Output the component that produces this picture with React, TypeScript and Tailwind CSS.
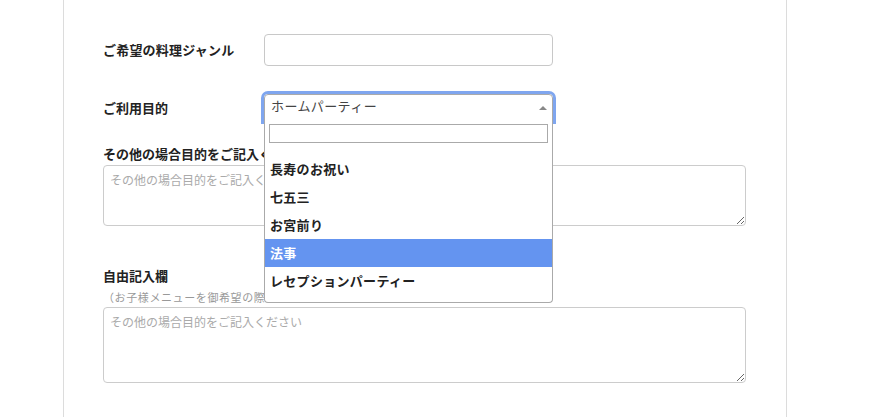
import React from 'react';

const FONT = { fontFamily: '"Noto Sans CJK JP", "Noto Sans", sans-serif' };

const OPTIONS = ['長寿のお祝い', '七五三', 'お宮前り', '法事', 'レセプションパーティー'];

export default function App() {
  return (
    <div className="min-h-screen bg-white text-[#222]" style={FONT}>
      <div className="ml-[63px] w-[724px] min-h-[417px] border-x border-[#dcdcdc] px-[39px] pt-[34px]">
        {/* 料理ジャンル */}
        <div className="flex items-center">
          <label className="w-[161px] text-[13px] font-bold leading-[18px] tracking-[0.2px]">ご希望の料理ジャンル</label>
          <input className="w-[289px] h-[32px] rounded-[4px] border border-[#c8c8c8] bg-white px-2 text-[13px] outline-none" />
        </div>

        {/* 利用目的 */}
        <div className="flex items-center mt-[28px] relative z-10">
          <label className="w-[161px] text-[13px] font-bold leading-[18px]">ご利用目的</label>
          <div className="relative w-[289px]">
            <div className="h-[27px] flex items-center justify-between rounded-t-[4px] border border-[#aaa] bg-white pl-[6px] pr-[5px] pb-[3px] outline-[3px] outline-[#7fa6ef] [outline-style:solid]">
              <span className="text-[13px] text-[#444] tracking-[0.4px]">ホームパーティー</span>
              <span className="w-0 h-0 border-x-[4px] border-x-transparent border-b-[4px] border-b-[#888] mt-[4px]" />
            </div>
            {/* dropdown */}
            <div className="absolute left-0 top-[26px] w-[289px] border border-t-0 border-[#aaa] rounded-b-[4px] bg-white">
              <div className="px-[4px] pt-[4px] pb-[3px]">
                <input className="block w-full h-[19px] border border-[#aaa] outline-none text-[13px] px-1" />
              </div>
              <div className="h-[156px] overflow-hidden pt-[9px]">
                {OPTIONS.map((o) => (
                  <div
                    key={o}
                    className={`h-[28px] flex items-center px-[5px] text-[13px] font-semibold tracking-[0.3px] ${o === '法事' ? 'bg-[#6494f0] text-white' : 'text-[#222]'}`}
                  >
                    {o}
                  </div>
                ))}
              </div>
            </div>
          </div>
        </div>

        {/* その他 */}
        <div className="mt-[24px] text-[13px] font-bold leading-[18px]">その他の場合目的をご記入ください</div>
        <textarea
          className="mt-[2px] block w-[643px] h-[61px] rounded-[4px] border border-[#ccc] px-[6px] py-[5px] text-[12px] placeholder:text-[#aaa] outline-none"
          placeholder="その他の場合目的をご記入ください"
        />

        {/* 自由記入欄 */}
        <div className="mt-[41px] text-[13px] font-bold leading-[18px]">自由記入欄</div>
        <div className="mt-[4px] text-[11px] leading-[16px] text-[#999] tracking-[0.6px]">（お子様メニューを御希望の際はご記入ください）</div>
        <textarea
          className="mt-[2px] block w-[643px] h-[76px] rounded-[4px] border border-[#ccc] px-[6px] py-[5px] text-[12px] placeholder:text-[#aaa] outline-none"
          placeholder="その他の場合目的をご記入ください"
        />
      </div>
    </div>
  );
}
